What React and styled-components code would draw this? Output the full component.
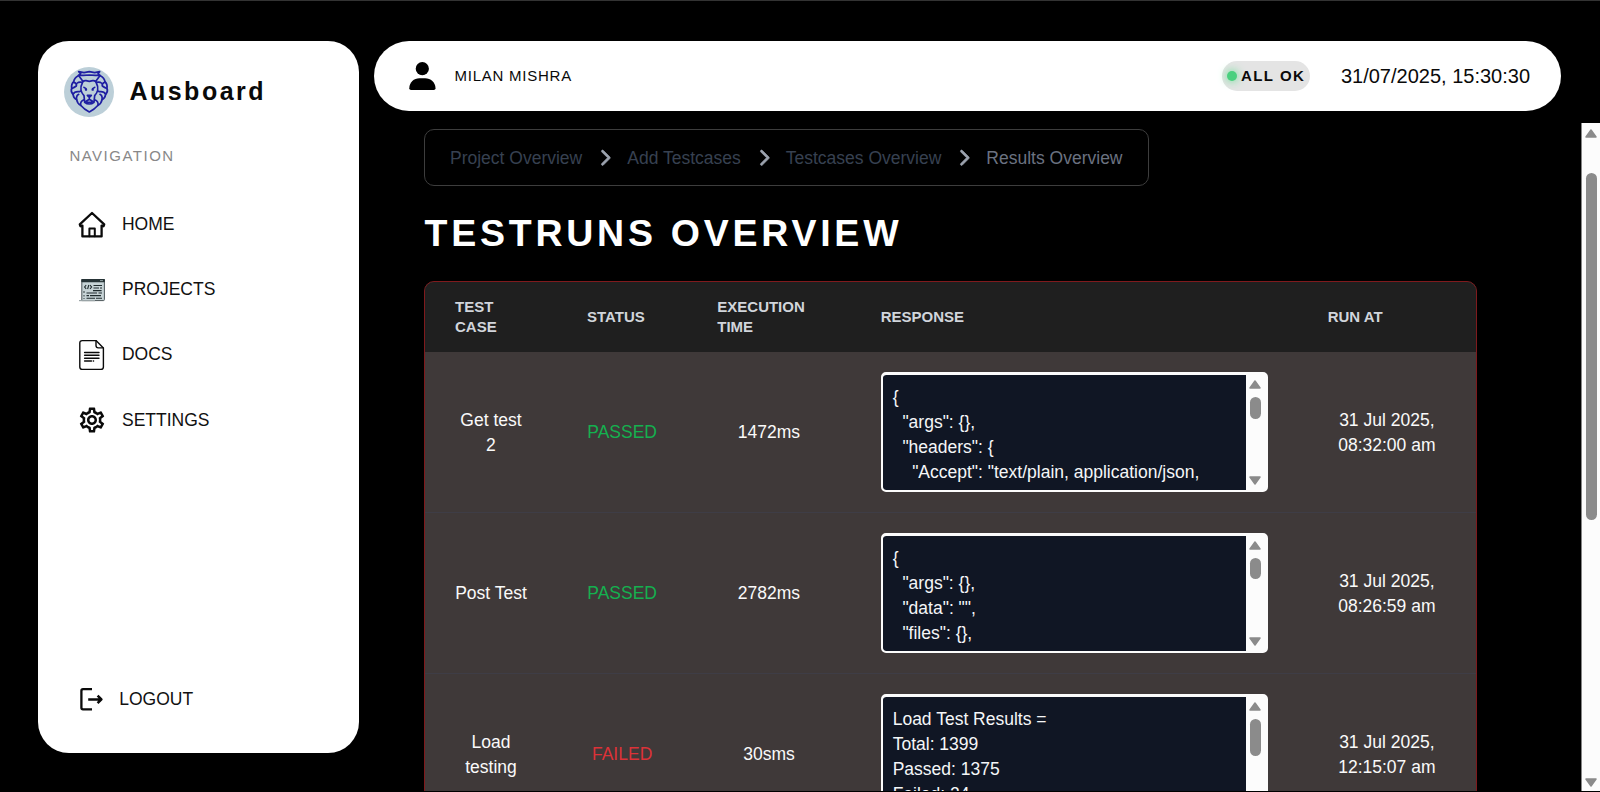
import React from "react";
import styled, { createGlobalStyle } from "styled-components";
import { FaChevronRight } from "react-icons/fa6";
import { MdOutlineSettings } from "react-icons/md";

const GlobalStyle = createGlobalStyle`
  *, *::before, *::after { box-sizing: border-box; }
  html, body { margin: 0; padding: 0; background: #000; overflow: hidden; }
  body {
    font-family: "Liberation Sans", Arial, Helvetica, sans-serif;
    font-size: 17.5px;
    line-height: 25px;
  }
`;

const Page = styled.div`
  display: flex;
  height: 792px;
  border-top: 1px solid #333;
  border-bottom: 1px solid #000;
  background: #000;
`;

const Sidebar = styled.aside`
  display: flex;
  flex-direction: column;
  width: 320.6px;
  height: 712px;
  margin: 40px 0 0 38.4px;
  padding: 26px 26px 41px;
  border-radius: 31px;
  background: #fff;
  color: #0a0a0a;
  flex: none;
`;

const Brand = styled.div`
  display: flex;
  align-items: center;
  gap: 15px;
`;

const BrandName = styled.span`
  font-size: 25px;
  font-weight: 700;
  letter-spacing: 2.5px;
  line-height: 30px;
  padding-bottom: 3px;
`;

const SectionLabel = styled.div`
  margin: 29px 0 26px 5px;
  font-size: 15px;
  line-height: 20px;
  letter-spacing: 1.5px;
  color: #888;
`;

const NavItem = styled.a`
  display: flex;
  align-items: center;
  gap: ${(p) => p.$gap || 15}px;
  height: ${(p) => p.$height || 65.2}px;
  padding-left: 12.6px;
  color: #111;
`;

const NavIcon = styled.span`
  display: flex;
  align-items: center;
  justify-content: center;
  width: 30px;
  height: 32px;
  flex: none;
  color: #0a0a0a;
`;

const Spacer = styled.div`
  flex: 1;
`;

const Main = styled.main`
  display: flex;
  flex-direction: column;
  flex: 1;
  min-width: 0;
  margin-left: 15px;
`;

const TopBar = styled.header`
  display: flex;
  align-items: center;
  flex: none;
  height: 70px;
  margin: 40px 39px 12px 0;
  padding: 0 31px 0 35px;
  border-radius: 35px;
  background: #fff;
  color: #0a0a0a;
`;

const UserName = styled.span`
  margin-left: 18.6px;
  padding-bottom: 2px;
  font-size: 15px;
  letter-spacing: 0.75px;
`;

const StatusBadge = styled.span`
  display: flex;
  align-items: center;
  gap: 4px;
  height: 30px;
  padding: 0 5px 0 5px;
  margin-right: 30.5px;
  border-radius: 15px;
  background: #e4e4e4;
  font-size: 15px;
  font-weight: 700;
  line-height: 23px;
  letter-spacing: 1.5px;
`;

const StatusLabel = styled.span`
  padding-bottom: 2px;
`;

const StatusDot = styled.i`
  width: 10px;
  height: 10px;
  border-radius: 50%;
  background: #4ad07f;
  box-shadow: 0 0 10px #4ade80;
`;

const Clock = styled.time`
  font-size: 20px;
`;

const ScrollArea = styled.div`
  display: flex;
  flex: 1;
  min-height: 0;
  overflow: hidden;
`;

const Content = styled.div`
  flex: 1;
  padding: 6px 0 0 50px;
`;

const Breadcrumb = styled.nav`
  display: flex;
  align-items: center;
  gap: 13.75px;
  width: 725px;
  height: 57px;
  padding: 1px 25px 0;
  border: 1px solid #3d3d3d;
  border-radius: 10px;
  white-space: nowrap;
  svg {
    color: #9ca3af;
    flex: none;
    stroke: currentColor;
    stroke-width: 22px;
    stroke-linejoin: round;
    overflow: visible;
  }
`;

const Crumb = styled.span`
  color: ${(p) => (p.$current ? "#6b7280" : "#374151")};
`;

const Title = styled.h1`
  margin: 25px 0 25px 0.6px;
  font-size: 37.5px;
  line-height: 45px;
  letter-spacing: 3.75px;
  font-weight: 700;
  color: #fff;
`;

const Table = styled.section`
  width: 1053px;
  border: 1px solid #7f1a1d;
  border-radius: 10px;
  overflow: hidden;
  background: #3f3939;
`;

const Row = styled.div`
  display: grid;
  grid-template-columns: 132px 130.3px 163.4px 447px 178.3px;
  align-items: center;
`;

const HeadRow = styled(Row)`
  height: 70px;
  background: #1f1f1f;
`;

const BodyRow = styled(Row)`
  height: 161px;
  border-bottom: 1px solid #3e3d46;
`;

const HeadCell = styled.div`
  padding: 0 30px;
  font-size: 15px;
  line-height: 20px;
  font-weight: 700;
  color: #d1d5db;
`;

const statusColors = { PASSED: "#14b04f", FAILED: "#dc3238" };

const Cell = styled.div`
  padding: ${(p) => (p.$flush ? 0 : 1)}px ${(p) => (p.$narrow ? 20 : 30)}px 0;
  text-align: center;
  color: ${(p) => statusColors[p.$status] || "#fafafa"};
`;

const ResponseBox = styled.div`
  display: flex;
  height: 120px;
  border: solid #fcfcfc;
  border-width: 3px 2px 2px;
  border-radius: 5px;
  background: #fcfcfc;
  overflow: hidden;
`;

const ResponseText = styled.pre`
  flex: 1;
  margin: 0;
  padding: 10px;
  overflow: hidden;
  border-radius: 3px 0 0 3px;
  background: #101624;
  color: #f5f6f8;
  font: inherit;
  text-align: left;
  white-space: pre-wrap;
`;

const Track = styled.div`
  display: flex;
  flex-direction: column;
  align-items: center;
  flex: none;
  width: ${(p) => (p.$edge ? 19 : 20)}px;
  padding: ${(p) => (p.$edge ? "6px 0 4px" : "5px 1px 5px 0")};
  border-left: ${(p) => (p.$edge ? "1px solid #858585" : "0")};
  background: #fcfcfc;
`;

const Thumb = styled.div`
  width: 11px;
  height: ${(p) => p.$size}px;
  margin-top: ${(p) => p.$offset}px;
  border-radius: 6px;
  background: #8b8b8b;
`;

const ArrowSvg = styled.svg`
  flex: none;
  transform: ${(p) => (p.$down ? "rotate(180deg)" : "none")};
`;

const Arrow = ({ down }) => (
  <ArrowSvg $down={down} width="12" height="9" viewBox="0 0 12 9">
    <path d="M6 1 L11 8 H1 Z" fill="#8b8b8b" stroke="#8b8b8b" strokeWidth="1.5" strokeLinejoin="round" />
  </ArrowSvg>
);

const Scrollbar = ({ size, offset, edge }) => (
  <Track $edge={edge}>
    <Arrow />
    <Thumb $size={size} $offset={offset} />
    <Spacer />
    <Arrow down />
  </Track>
);

const LionLogo = () => (
  <svg width="50" height="50" viewBox="0 0 150 150">
    <circle cx="75" cy="75" r="75" fill="#bccfd8" />
    <g fill="none" stroke="#1f1fa2" strokeWidth="5" strokeLinejoin="round" strokeLinecap="round">
      <path d="M44 14 L60 17 L76 14 L92 17 L107 14 L102 20 L108 25 L94 25 L76 24 L58 25 L43 25 L50 20 Z" />
      <path d="M43 26 Q31 32 29 44 Q21 52 23 64 Q19 74 27 82 Q29 94 38 98 Q40 110 50 115 Q60 127 76 135 Q92 127 102 115 Q112 110 114 98 Q123 94 125 82 Q133 74 129 64 Q131 52 123 44 Q121 32 109 26" />
      <path d="M55 48 Q56 40 66 41 L76 43 L86 41 Q96 40 97 48 Q103 58 101 70 Q99 78 92 86 L90 106 Q84 111 76 111 Q68 111 62 106 L60 86 Q53 78 51 70 Q49 58 55 48 Z" />
      <path d="M29 45 Q40 50 37 57 Q30 62 25 64 M55 46 Q44 44 40 48 M27 82 Q32 72 46 74 L51 72 M38 98 Q36 86 44 82 M50 115 Q48 102 60 98 M123 45 Q112 50 115 57 Q122 62 127 64 M97 46 Q108 44 112 48 M125 82 Q120 72 106 74 L101 72 M114 98 Q116 86 108 82 M102 115 Q104 102 92 98" />
      <path d="M45 27 Q50 34 56 42 M107 27 Q102 34 96 42 M60 61 L66 65 M92 61 L86 65" />
      <path d="M70 85 H82 L76 91 Z M76 91 V97 L64 104 M76 97 L88 104 M68 106 H84" />
    </g>
    <circle cx="66" cy="68" r="3.6" fill="#1f1fa2" />
    <circle cx="86" cy="68" r="3.6" fill="#1f1fa2" />
  </svg>
);

const HomeIcon = () => (
  <svg width="30" height="30" viewBox="0 0 30 30" fill="none" stroke="currentColor" strokeWidth="2.3" strokeLinejoin="round" strokeLinecap="round">
    <path d="M5.4 15.6 L3.4 16.2 L2.8 14.4 L15 3 L27.2 14.4 L26.6 16.2 L24.6 15.6 V26.4 H5.4 Z" />
    <path d="M12.4 26.2 V18.4 H17.8 V26.2" strokeWidth="2" />
  </svg>
);

const ProjectsIcon = () => (
  <svg width="30" height="30" viewBox="0 0 30 30">
    <path d="M4.8 4.6 H27.4 V24.6 Q27.4 25.6 26.4 25.6 H4.8 Z" fill="#c6d3d6" stroke="#4a5659" strokeWidth="1" />
    <rect x="4.3" y="4" width="23.6" height="3.2" rx="0.8" fill="#263336" />
    <path d="M23 5.6 H26" stroke="#a9b9bd" strokeWidth="0.8" />
    <path d="M2 25.6 H18" stroke="#9aa4a7" strokeWidth="1.2" />
    <g fill="none" stroke="#1f2b2e" strokeWidth="1.1">
      <path d="M9.2 10.2 L7.6 12 L9.2 13.8 M13 10.2 L14.6 12 L13 13.8 M11.8 10 L10.6 14" />
      <path d="M16.5 10.5 H25 M16.5 13 H22 M23 13 H25 M16 15.6 H24.6 M9.5 18 H20 M21.5 18 H25 M9.5 20.6 H12 M13 20.6 H24 M9.5 23.2 H18 M19 23.2 H25" />
      <path d="M7 16 V18 M7 20 V21.5 M7 23 V24" strokeWidth="0.9" />
    </g>
  </svg>
);

const DocsIcon = () => (
  <svg width="30" height="32" viewBox="0 0 30 32" fill="none" stroke="currentColor" strokeLinejoin="round" strokeLinecap="round">
    <path d="M5.2 1.6 H19 L26.4 9 V28 Q26.4 30.4 24 30.4 H5.2 Q2.8 30.4 2.8 28 V4 Q2.8 1.6 5.2 1.6 Z" strokeWidth="1.4" />
    <path d="M19 1.8 V6.6 Q19 8.9 21.3 8.9 H26.2" strokeWidth="1.4" />
    <path d="M7.6 13.5 H22 M7.6 16.3 H22 M7.6 19.2 H22 M7.6 22 H14.5 M16.3 22 H16.6" strokeWidth="1.4" />
  </svg>
);

const LogoutIcon = () => (
  <svg width="30" height="30" viewBox="0 0 30 30" fill="none" stroke="currentColor" strokeWidth="2.3" strokeLinejoin="round">
    <path d="M15 4.2 H6 Q4.4 4.2 4.4 5.8 V22.8 Q4.4 24.4 6 24.4 H15" />
    <path d="M11.2 14.4 H24.6 M20.6 10.6 L24.4 14.4 L20.6 18.2" strokeWidth="2.5" />
  </svg>
);

const UserIcon = () => (
  <svg width="27" height="28" viewBox="0 0 27 28" fill="#000">
    <circle cx="13.3" cy="6.7" r="6.6" />
    <path d="M0.3 26.2 C0.3 20.2 5 16.2 10.4 16.2 H16.2 C21.6 16.2 26.5 20.2 26.5 26.2 Q26.5 27.9 24.8 27.9 H2 Q0.3 27.9 0.3 26.2 Z" />
  </svg>
);

const navItems = [
  ["HOME", <HomeIcon />],
  ["PROJECTS", <ProjectsIcon />],
  ["DOCS", <DocsIcon />],
  ["SETTINGS", <MdOutlineSettings size={30} />],
];

const crumbs = ["Project Overview", "Add Testcases", "Testcases Overview", "Results Overview"];

const columns = ["TEST CASE", "STATUS", "EXECUTION TIME", "RESPONSE", "RUN AT"];

const runs = [
  {
    name: "Get test 2",
    status: "PASSED",
    time: "1472ms",
    response: '{\n  "args": {},\n  "headers": {\n    "Accept": "text/plain, application/json,',
    thumb: 22,
    runAt: "31 Jul 2025, 08:32:00 am",
  },
  {
    name: "Post Test",
    status: "PASSED",
    time: "2782ms",
    response: '{\n  "args": {},\n  "data": "",\n  "files": {},',
    thumb: 21,
    runAt: "31 Jul 2025, 08:26:59 am",
  },
  {
    name: "Load testing",
    status: "FAILED",
    time: "30sms",
    response: "Load Test Results =\nTotal: 1399\nPassed: 1375\nFailed: 24",
    thumb: 37,
    runAt: "31 Jul 2025, 12:15:07 am",
  },
];

export default function App() {
  return (
    <>
      <GlobalStyle />
      <Page>
        <Sidebar>
          <Brand>
            <LionLogo />
            <BrandName>Ausboard</BrandName>
          </Brand>
          <SectionLabel>NAVIGATION</SectionLabel>
          {navItems.map(([label, icon]) => (
            <NavItem key={label}>
              <NavIcon>{icon}</NavIcon>
              {label}
            </NavItem>
          ))}
          <Spacer />
          <NavItem $height={25} $gap={12.2}>
            <NavIcon>
              <LogoutIcon />
            </NavIcon>
            LOGOUT
          </NavItem>
        </Sidebar>
        <Main>
          <TopBar>
            <UserIcon />
            <UserName>MILAN MISHRA</UserName>
            <Spacer />
            <StatusBadge>
              <StatusDot />
              <StatusLabel>ALL OK</StatusLabel>
            </StatusBadge>
            <Clock>31/07/2025, 15:30:30</Clock>
          </TopBar>
          <ScrollArea>
            <Content>
              <Breadcrumb>
                {crumbs.map((label, i) => (
                  <React.Fragment key={label}>
                    {i > 0 && <FaChevronRight size={17.5} />}
                    <Crumb $current={i === crumbs.length - 1}>{label}</Crumb>
                  </React.Fragment>
                ))}
              </Breadcrumb>
              <Title>TESTRUNS OVERVIEW</Title>
              <Table>
                <HeadRow>
                  {columns.map((label) => (
                    <HeadCell key={label}>{label}</HeadCell>
                  ))}
                </HeadRow>
                {runs.map((run) => (
                  <BodyRow key={run.name}>
                    <Cell>{run.name}</Cell>
                    <Cell $status={run.status} $narrow>
                      {run.status}
                    </Cell>
                    <Cell>{run.time}</Cell>
                    <Cell $flush>
                      <ResponseBox>
                        <ResponseText>{run.response}</ResponseText>
                        <Scrollbar size={run.thumb} offset={8} />
                      </ResponseBox>
                    </Cell>
                    <Cell>{run.runAt}</Cell>
                  </BodyRow>
                ))}
              </Table>
            </Content>
            <Scrollbar size={347} offset={35} edge />
          </ScrollArea>
        </Main>
      </Page>
    </>
  );
}
